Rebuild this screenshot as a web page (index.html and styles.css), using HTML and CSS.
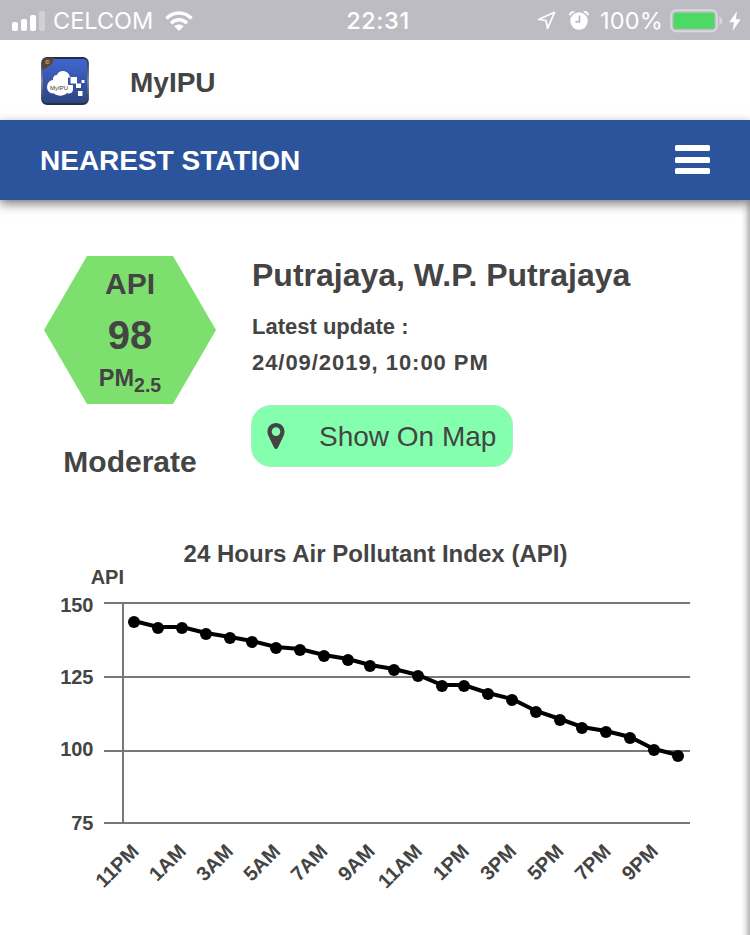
FILE: index.html
```html
<!DOCTYPE html>
<html lang="en">
<head>
    <meta charset="UTF-8">
    <title>MyIPU</title>
    <link rel="stylesheet" href="styles.css">
</head>
<body>
<!-- status bar -->
<div class="status">
    <div class="status-left">
        <svg class="signal" width="33" height="20" viewBox="0 0 33 20" fill="#fff">
            <rect x="0" y="11" width="6" height="9" rx="2"/>
            <rect x="9" y="8" width="6" height="12" rx="2"/>
            <rect x="18" y="4" width="6" height="16" rx="2"/>
            <rect x="27" y="0" width="6" height="20" rx="2" opacity=".3"/>
        </svg>
        <span class="carrier">CELCOM</span>
        <svg class="wifi" width="28" height="20" viewBox="0 0 28 20">
            <path d="M1.5 7.5C8.5 .2 19.500 .2 26.500 7.500" fill="none" stroke="#fff" stroke-width="3.600"/>
            <path d="M6 12.200C10.500 7.600 17.500 7.600 22 12.200" fill="none" stroke="#fff" stroke-width="3.500"/>
            <path d="M14 20L9.200 15.300C12 13 16 13 18.800 15.300Z" fill="#fff"/>
        </svg>
    </div>
    <span class="clock">22:31</span>
    <div class="status-right">
        <svg class="location" width="19" height="19" viewBox="0 0 19 19">
            <path d="M17.500 1.300L1.500 8.500L9 9.500L10.500 17.500Z" fill="none" stroke="#fff" stroke-width="1.700" stroke-linejoin="round"/>
        </svg>
        <svg class="alarm" width="20" height="19" viewBox="0 0 20 19">
            <circle cx="10" cy="10" r="8.700" fill="#fff"/>
            <path d="M.8 4.300C1.200 2 3 .8 5.200 1M19.200 4.300C18.800 2 17 .8 14.800 1" fill="none" stroke="#fff" stroke-width="1.800"/>
            <path d="M10.500 4.500V10.800H6.300" fill="none" stroke="#b4b4bb" stroke-width="1.600"/>
        </svg>
        <span class="percent">100%</span>
        <svg class="battery" width="53" height="24" viewBox="0 0 53 24">
            <rect x="1.200" y="1.200" width="45.600" height="21" rx="5" fill="none" stroke="#d9d9dd" stroke-width="2"/>
            <rect x="3.500" y="3.700" width="41" height="16" rx="2.500" fill="#4cd964"/>
            <path d="M49.500 8Q52.500 9 52.500 12T49.500 16Z" fill="#d9d9dd"/>
        </svg>
        <svg class="bolt" width="12" height="20" viewBox="0 0 12 20">
            <path d="M8 0L.3 11.300H5L3.600 20L11.700 8.200H6.800Z" fill="#fff"/>
        </svg>
    </div>
</div>

<!-- app title -->
<header class="apphead">
    <svg class="logo" width="48" height="48" viewBox="0 0 48 48">
        <defs>
            <linearGradient id="blue" x1="0" y1="0" x2="0" y2="1">
                <stop offset="0" stop-color="#4166d2"/>
                <stop offset="1" stop-color="#2c4580"/>
            </linearGradient>
            <linearGradient id="rim" x1="0" y1="0" x2="0" y2="1">
                <stop offset="0" stop-color="#252d42"/>
                <stop offset=".5" stop-color="#7888a8"/>
                <stop offset="1" stop-color="#252d42"/>
            </linearGradient>
        </defs>
        <rect x="1" y="1" width="46" height="46" rx="5" fill="url(#blue)" stroke="url(#rim)" stroke-width="1.800"/>
        <path d="M1 6Q1 1 6 1H13Q12 10 1 12Z" fill="#57452f"/>
        <circle cx="6.500" cy="5" r="2.200" fill="#b08f5c"/>
        <circle cx="7" cy="5" r=".8" fill="#3a2618"/>
        <path d="M13 36.500C4 37 4 24 12 23C12 19 14 18 16 18C18 12 28 13 29 20.500H27V28H32V33C31 37 28 37 26 36C22 40 16 39 13 36.500Z" fill="#fff"/>
        <path d="M29.500 20H36V26.500H29.500ZM35 26.500H40V31H35ZM40.500 23H43.500V26H40.500ZM37 34H41.500V39H37ZM29 29H32V32H29Z" fill="#fff"/>
        <text class="logo-text" x="9" y="33">MyIPU</text>
    </svg>
    <h1>MyIPU</h1>
</header>

<nav class="bar">
    <h2>NEAREST STATION</h2>
    <div class="menu">
        <span></span>
        <span></span>
        <span></span>
    </div>
</nav>

<main>
    <!-- current reading -->
    <section class="station">
        <div class="reading">
            <div class="hexagon">
                <span class="api">API</span>
                <span class="value">98</span>
                <span class="pm">PM<small>2.5</small></span>
            </div>
            <p class="level">Moderate</p>
        </div>
        <div class="info">
            <h3>Putrajaya, W.P. Putrajaya</h3>
            <p class="label">Latest update :</p>
            <p class="date">24/09/2019, 10:00 PM</p>
            <button class="mapbtn">
                <svg width="18" height="27" viewBox="0 0 18 27">
                    <path fill-rule="evenodd" d="M9 0C14 0 17.500 3.800 17.500 8.500C17.500 11 16.800 12.500 15.800 14.500L11 24.500Q9 27.500 7 24.500L2.200 14.500C1.200 12.500 .5 11 .5 8.500C.5 3.800 4 0 9 0ZM9 4.300A4.300 4.300 0 1 0 9 12.900A4.300 4.300 0 1 0 9 4.300Z" fill="#444"/>
                </svg>
                <span>Show On Map</span>
            </button>
        </div>
    </section>

    <!-- 24 hours chart -->
    <svg class="chart" width="750" height="405" viewBox="0 530 750 405">
        <text class="chart-title" x="183.500" y="562" textLength="384">24 Hours Air Pollutant Index (API)</text>
        <text class="axis" x="124" y="584" text-anchor="end">API</text>
        <g class="axis" text-anchor="end">
            <text x="93.500" y="612">150</text>
            <text x="93.500" y="684">125</text>
            <text x="93.500" y="756">100</text>
            <text x="93.500" y="830">75</text>
        </g>
        <path class="grid" d="M104 603H690M104 677H690M104 751H690M104 823H690M123 603V823"/>
        <polyline class="line" points="134,621 158,627 182,627 206,633 230,637 252,641 276,647 300,649 324,655 348,659 370,665 394,669 418,675 442,685 464,685 488,693 512,699 536,711 560,719 582,727 606,731 630,737 654,749 678,755"/>
        <g id="dots"></g>
        <g class="axis" id="hours" text-anchor="end"></g>
    </svg>
</main>
<script>
    var svg = 'http://www.w3.org/2000/svg';
    var points = document.querySelector('.line').points;
    var dots = document.querySelector('#dots');
    var hours = document.querySelector('#hours');
    var names = ['11PM', '1AM', '3AM', '5AM', '7AM', '9AM', '11AM', '1PM', '3PM', '5PM', '7PM', '9PM'];

    for (let i = 0; i < points.length; i++) {
        let dot = document.createElementNS(svg, 'circle');
        dot.setAttribute('cx', points[i].x);
        dot.setAttribute('cy', points[i].y + 1);
        dot.setAttribute('r', 6);
        dots.appendChild(dot);
    }
    // one label for every second hour
    for (let i = 0; i < names.length; i++) {
        let text = document.createElementNS(svg, 'text');
        let x = 140 + i * 47.2;
        text.setAttribute('transform', 'translate(' + x + ' 852.5) rotate(-45)');
        text.textContent = names[i];
        hours.appendChild(text);
    }
</script>
</body>
</html>
```
FILE: styles.css
```css
* {
    margin: 0;
    padding: 0;
    box-sizing: border-box;
}

body {
    width: 750px;
    height: 935px;
    overflow: hidden;
    background: #fff;
    color: #444;
    font-family: "Liberation Sans", Arial, sans-serif;
}

svg {
    display: block;
    flex: none;
}

.status {
    display: grid;
    grid-template-columns: 1fr auto 1fr;
    align-items: center;
    height: 40px;
    padding: 0 9px 0 12px;
    background: #bdbcc3;
    color: #fff;
    font-family: Inter, sans-serif;
    font-size: 23.5px;
    line-height: 41px;
}

.status-left,
.status-right {
    display: flex;
    align-items: center;
}

.status-right {
    justify-content: flex-end;
}

.carrier {
    margin: 0 12px 0 8px;
}

.clock {
    padding-left: 3px;
    font-weight: 500;
    letter-spacing: .6px;
}

.alarm {
    margin: 0 11px 0 13px;
}

.percent {
    letter-spacing: .2px;
}

.battery {
    margin: 0 6px 0 7px;
}

.apphead {
    display: flex;
    align-items: center;
    height: 80px;
    padding: 2px 41px 0;
}

.apphead h1 {
    margin-left: 41px;
    padding-top: 3px;
    font-size: 28px;
}

.logo-text {
    fill: #333;
    font-size: 6px;
}

.bar {
    display: flex;
    align-items: center;
    justify-content: space-between;
    position: relative;
    height: 80px;
    padding: 0 40px;
    background: #2c549d;
    color: #fff;
    box-shadow: 0 4px 10px rgba(0, 0, 0, .5);
}

.bar h2 {
    padding-top: 1px;
    font-size: 28px;
}

.menu {
    display: flex;
    flex-direction: column;
    gap: 5.500px;
    width: 35px;
    margin-bottom: 1px;
}

.menu span {
    height: 6px;
    border-radius: 1.500px;
    background: #fff;
}

main {
    height: 755px;
    box-shadow: inset -7px 0 7px -5px rgba(0, 0, 0, .42);
}

.station {
    display: flex;
    height: 330px;
    padding: 56px 44px 0;
}

.reading {
    width: 172px;
    margin-right: 35px;
    text-align: center;
    font-weight: bold;
}

.hexagon {
    display: flex;
    flex-direction: column;
    height: 148px;
    background: #7de06e;
    clip-path: polygon(25% 0, 75% 0, 100% 50%, 75% 100%, 25% 100%, 0 50%);
}

.api {
    padding-top: 10px;
    font-size: 30px;
    line-height: 36px;
}

.value {
    padding-top: 10px;
    font-size: 40px;
    line-height: 46px;
}

.pm {
    padding-top: 6px;
    font-size: 23.500px;
    line-height: 28px;
}

.pm small {
    position: relative;
    top: 6px;
    font-size: 19.500px;
}

.level {
    padding-top: 40px;
    font-size: 30px;
    line-height: 36px;
}

.info h3 {
    padding-left: 1px;
    font-size: 32px;
    line-height: 38px;
}

.info p {
    padding-left: 1px;
    font-size: 22px;
    font-weight: bold;
    line-height: 36px;
}

.label {
    margin-top: 15px;
}

.info .date {
    letter-spacing: .95px;
}

.mapbtn {
    display: flex;
    align-items: center;
    width: 262px;
    height: 62px;
    margin-top: 24px;
    padding-left: 15px;
    border: 1px solid #a8eec3;
    border-radius: 20px;
    background: #84ffad;
    color: #444;
    font: 28px "Liberation Sans", Arial, sans-serif;
}

.mapbtn span {
    margin-left: 34px;
    padding-top: 2px;
    white-space: nowrap;
}

.chart text {
    fill: #444;
    font-weight: bold;
}

.chart-title {
    font-size: 24px;
}

.axis {
    font-size: 20px;
}

.grid {
    fill: none;
    stroke: #777;
    stroke-width: 2;
}

.line {
    fill: none;
    stroke: #000;
    stroke-width: 4;
}
```
